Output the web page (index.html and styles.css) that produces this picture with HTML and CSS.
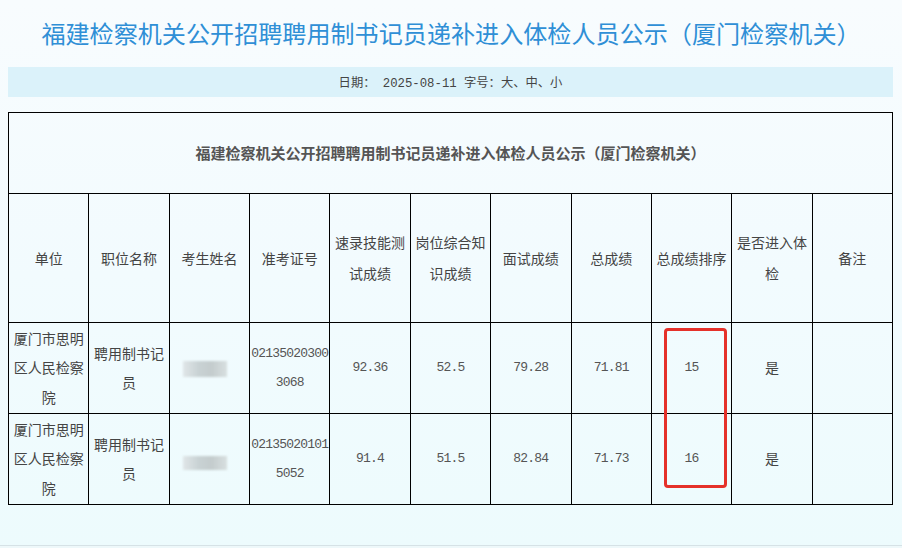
FILE: index.html
```html
<!DOCTYPE html>
<html lang="zh-CN">
<head>
<meta charset="utf-8">
<title>公示</title>
<link rel="stylesheet" href="styles.css">
</head>
<body>
<div class="page">
  <h1 class="title">福建检察机关公开招聘聘用制书记员递补进入体检人员公示（厦门检察机关）</h1>
  <div class="datebar"><span class="mono">日期： 2025-08-11 字号：</span><span>大、中、小</span></div>
  <div class="table-wrap">
    <table class="grid">
      <colgroup>
        <col><col><col><col><col><col><col><col><col><col><col>
      </colgroup>
      <tr class="caption-row">
        <td colspan="11">福建检察机关公开招聘聘用制书记员递补进入体检人员公示（厦门检察机关）</td>
      </tr>
      <tr class="head-row">
        <td>单位</td>
        <td>职位名称</td>
        <td>考生姓名</td>
        <td>准考证号</td>
        <td>速录技能测试成绩</td>
        <td>岗位综合知识成绩</td>
        <td>面试成绩</td>
        <td>总成绩</td>
        <td>总成绩排序</td>
        <td>是否进入体检</td>
        <td>备注</td>
      </tr>
      <tr class="data-row">
        <td>厦门市思明区人民检察院</td>
        <td>聘用制书记员</td>
        <td><span class="blur blur-a"></span></td>
        <td class="num tight">02135020300<br>3068</td>
        <td class="num">92.36</td>
        <td class="num">52.5</td>
        <td class="num">79.28</td>
        <td class="num">71.81</td>
        <td class="num">15</td>
        <td>是</td>
        <td></td>
      </tr>
      <tr class="data-row">
        <td>厦门市思明区人民检察院</td>
        <td>聘用制书记员</td>
        <td><span class="blur blur-b"></span></td>
        <td class="num tight">02135020101<br>5052</td>
        <td class="num">91.4</td>
        <td class="num">51.5</td>
        <td class="num">82.84</td>
        <td class="num">71.73</td>
        <td class="num">16</td>
        <td>是</td>
        <td></td>
      </tr>
    </table>
    <div class="highlight"></div>
  </div>
  <div class="footer-line"></div>
</div>
</body>
</html>
```

FILE: styles.css
```css
html, body {
  margin: 0;
  padding: 0;
}
body {
  width: 902px;
  height: 548px;
  overflow: hidden;
  background: linear-gradient(180deg, #f8fcfe 0%, #f2fbfe 50%, #edfbfd 100%);
  font-family: "Noto Sans CJK SC", "Noto Sans", sans-serif;
  color: #444;
}
.page {
  display: flex;
  flex-direction: column;
  height: 548px;
}
.title {
  margin: 0;
  height: 67px;
  line-height: 66px;
  text-align: center;
  font-size: 24.1px;
  font-weight: 400;
  color: #2f8fd6;
  letter-spacing: 0;
}
.datebar {
  margin: 0 9px 0 8px;
  height: 30px;
  line-height: 30px;
  background: #dbf2fa;
  text-align: center;
  font-size: 12.3px;
  color: #444;
}
.mono {
  font-family: "Liberation Mono", "Noto Sans CJK SC", monospace;
  font-size: 12.3px;
}
.table-wrap {
  position: relative;
  margin: 15px 9px 0 8px;
}
.grid {
  width: 885px;
  border-collapse: collapse;
  table-layout: fixed;
  font-size: 14px;
  color: #444;
}
.grid td {
  border: 1px solid #000;
  text-align: center;
  vertical-align: middle;
  padding: 0 1px;
  line-height: 30px;
  word-break: break-all;
}
.caption-row td {
  height: 80px;
  font-size: 15px;
  font-weight: 700;
  color: #555;
}
.head-row td {
  height: 128px;
  line-height: 31px;
}
.data-row td {
  height: 90px;
  line-height: 29.5px;
}
.num {
  font-family: "Liberation Mono", "DejaVu Sans Mono", monospace;
  font-size: 13px;
  letter-spacing: -0.8px;
  color: #555;
}
.grid td.tight {
  padding: 0;
  white-space: nowrap;
}
.blur {
  display: inline-block;
  vertical-align: middle;
  width: 44px;
  background: linear-gradient(90deg, #e0e6e8 0%, #c9d2d4 35%, #c4cccd 65%, #d8dfe0 100%);
  filter: blur(1.2px);
}
.blur-a {
  height: 16px;
  margin-left: -8px;
}
.blur-b {
  height: 14px;
  margin-left: -8px;
  margin-top: 6px;
}
.highlight {
  position: absolute;
  left: 656px;
  top: 216px;
  width: 57px;
  height: 154px;
  border: 3px solid #e5312a;
  border-radius: 4px;
}
.footer-line {
  margin-top: auto;
  height: 2px;
  border-top: 1px solid #d6e2e6;
  background: #eef8fa;
}
```
